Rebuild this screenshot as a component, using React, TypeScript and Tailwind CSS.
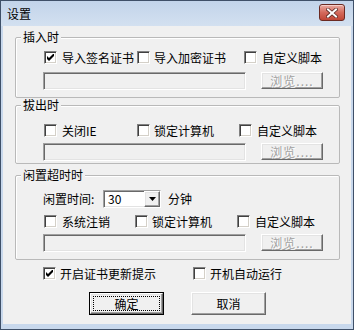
import React from 'react';

const sunken =
  'border border-t-[#a0a0a0] border-l-[#a0a0a0] border-b-white border-r-white shadow-[inset_1px_1px_0_#696969,inset_-1px_-1px_0_#e3e3e3]';
const raised =
  'border border-t-white border-l-white border-b-[#696969] border-r-[#696969] shadow-[inset_-1px_-1px_0_#a0a0a0,inset_1px_1px_0_#e3e3e3] bg-[#f0f0f0]';

function Box({ checked }: { checked?: boolean }) {
  return (
    <span className="w-[13px] h-[13px] shrink-0 bg-white border border-t-[#808080] border-l-[#808080] border-b-white border-r-white shadow-[inset_1px_1px_0_#404040,inset_-1px_-1px_0_#d4d0c8] flex items-center justify-center">
      {checked && (
        <svg width="7" height="7" viewBox="0 0 7 7">
          <polygon points="0,2 2,4 7,-1 7,2 2,7 0,5" fill="#000" />
        </svg>
      )}
    </span>
  );
}

function Check({ label, checked, w, gap = 'ml-[5px]' }: { label: string; checked?: boolean; w?: string; gap?: string }) {
  return (
    <div className={`flex items-center h-[13px] shrink-0 ${w ?? ''}`}>
      <Box checked={checked} />
      <span className={`${gap} whitespace-nowrap`}>{label}</span>
    </div>
  );
}

function BrowseRow() {
  return (
    <div className="flex items-start pl-[27px]">
      <div className={`h-[18px] w-[203px] bg-[#f0f0f0] ${sunken}`} />
      <div className={`ml-[15px] w-[62px] h-[17px] flex items-center justify-center ${raised}`}>
        <span className="text-[#a0a0a0] [text-shadow:1px_1px_0_#ffffff] tracking-[1px]">浏览....</span>
      </div>
    </div>
  );
}

function Group({ title, className, children }: { title: string; className?: string; children: React.ReactNode }) {
  return (
    <fieldset className={`border border-[#b9b9b9] rounded-[2px] shadow-[inset_1px_1px_0_#ffffff] ${className ?? ''}`}>
      <legend className="ml-[5px] px-[2px] bg-[#f0f0f0] leading-[14px]">{title}</legend>
      {children}
    </fieldset>
  );
}

export default function App() {
  return (
    <div className="w-[354px] h-[330px] bg-[#c8d8ec] border border-[#3f5068] flex flex-col relative overflow-hidden text-[12px] leading-[14px] text-black font-['Noto_Sans_CJK_SC',sans-serif]">
      {/* title bar */}
      <div className="h-[25px] shrink-0 flex items-start justify-between pl-[6px] pr-[8px] bg-gradient-to-b from-[#c2d4ea] to-[#d3e0f0]">
        <span className="mt-[6px]">设置</span>
        <div className="mt-[3px] w-[26px] h-[17px] rounded-[3px] border border-[#6b2a22] bg-gradient-to-b from-[#e8aaa2] via-[#d46a5c] to-[#c04636] flex items-center justify-center shadow-[inset_0_1px_0_#f5cfca]">
          <svg width="12" height="10" viewBox="0 0 12 10">
            <path d="M2 1.5 L10 8.5 M10 1.5 L2 8.5" stroke="#5a2a24" strokeWidth="3.6" strokeLinecap="square" />
            <path d="M2 1.5 L10 8.5 M10 1.5 L2 8.5" stroke="#ffffff" strokeWidth="2" strokeLinecap="square" />
          </svg>
        </div>
      </div>

      {/* client */}
      <div className="flex-1 mx-[2px] mb-[5px] bg-[#f0f0f0] pt-[4px] pl-[12px] pr-[11px] flex flex-col">
        <Group title="插入时">
          <div className="pt-[7px] pb-[7px]">
            <div className="flex pl-[28px]">
              <Check label="导入签名证书" checked w="w-[93px]" />
              <Check label="导入加密证书" w="w-[107px]" gap="ml-[4px]" />
              <Check label="自定义脚本" />
            </div>
            <div className="mt-[8px]">
              <BrowseRow />
            </div>
          </div>
        </Group>

        <Group title="拔出时">
          <div className="pt-[12px] pb-[2px]">
            <div className="flex pl-[28px]">
              <Check label="关闭IE" w="w-[93px]" />
              <Check label="锁定计算机" w="w-[102px]" gap="ml-[4px]" />
              <Check label="自定义脚本" />
            </div>
            <div className="mt-[6px]">
              <BrowseRow />
            </div>
          </div>
        </Group>

        <Group title="闲置超时时" className="mt-[4px]">
          <div className="pt-[8px] pb-[7px]">
            <div className="flex items-center pl-[27px] h-[18px]">
              <span className="w-[60px]">闲置时间:</span>
              <div className={`w-[58px] h-[18px] bg-white flex items-stretch ${sunken}`}>
                <span className="flex-1 pl-[4px] pt-[1px]">30</span>
                <div className={`w-[16px] flex items-center justify-center ${raised}`}>
                  <svg width="7" height="4" viewBox="0 0 7 4">
                    <polygon points="0,0 7,0 3.5,4" fill="#000" />
                  </svg>
                </div>
              </div>
              <span className="ml-[7px]">分钟</span>
            </div>
            <div className="flex pl-[28px] mt-[7px]">
              <Check label="系统注销" w="w-[91px]" />
              <Check label="锁定计算机" w="w-[102px]" gap="ml-[4px]" />
              <Check label="自定义脚本" />
            </div>
            <div className="mt-[6px]">
              <BrowseRow />
            </div>
          </div>
        </Group>

        <div className="flex pl-[28px] mt-[7px]">
          <Check label="开启证书更新提示" checked w="w-[150px]" gap="ml-[4px]" />
          <Check label="开机自动运行" gap="ml-[4px]" />
        </div>

        <div className="flex mt-[12px] pl-[74px] gap-[27px]">
          <div className="w-[75px] h-[23px] border border-black flex">
            <div className={`flex-1 flex p-[2px] ${raised}`}>
              <div className="flex-1 border border-dotted border-black flex items-center justify-center">确定</div>
            </div>
          </div>
          <div className={`w-[75px] h-[23px] flex items-center justify-center ${raised}`}>取消</div>
        </div>
      </div>
    </div>
  );
}
